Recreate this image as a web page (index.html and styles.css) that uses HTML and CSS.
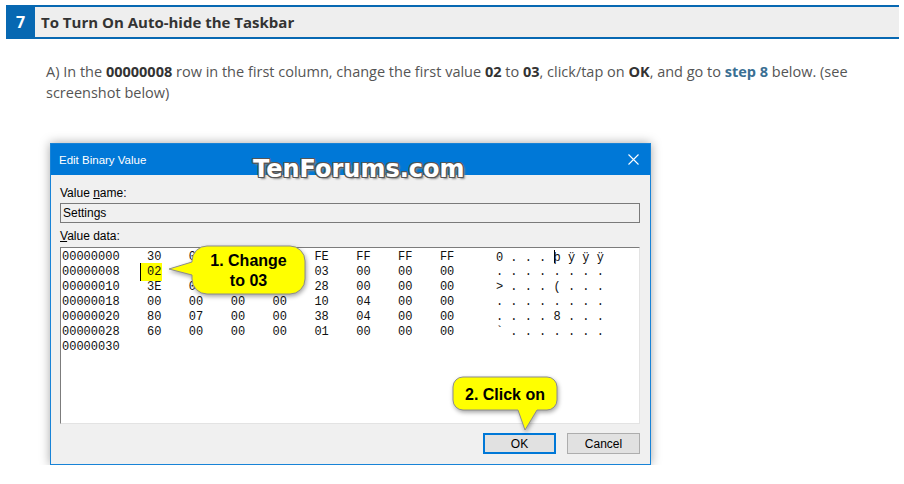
FILE: index.html
```html
<!DOCTYPE html>
<html lang="en">
<head>
  <meta charset="UTF-8">
  <meta name="viewport" content="width=device-width, initial-scale=1.0">
  <title>To Turn On Auto-hide the Taskbar</title>
  <link rel="stylesheet" href="styles.css">
</head>
<body>
  <div class="step">
    <span class="step-num">7</span>
    <h2 class="step-title">To Turn On Auto-hide the Taskbar</h2>
  </div>

  <p class="note">A) In the <b>00000008</b> row in the first column, change the first value <b>02</b> to <b>03</b>, click/tap on <b>OK</b>, and go to <a class="link" href="#step8">step 8</a> below. (see<br>screenshot below)</p>

  <div class="dialog">
    <div class="titlebar">
      <span>Edit Binary Value</span>
      <svg class="close" width="11" height="11" viewBox="0 0 11 11">
        <path d="M0.5 0.5 L10.5 10.5 M10.5 0.5 L0.5 10.5" stroke="#fff" stroke-width="1.1" fill="none"/>
      </svg>
    </div>

    <div class="watermark">TenForums.com</div>

    <div class="dlg-body">
      <div class="lbl">Value <u>n</u>ame:</div>
      <div class="field">Settings</div>
      <div class="lbl lbl-data"><u>V</u>alue data:</div>
      <div class="hexbox">
        <span>00000000</span><span>30</span><span>00</span><span>00</span><span>00</span><span>FE</span><span>FF</span><span>FF</span><span>FF</span><span class="ascii">0 . . . <i class="caret"></i>þ ÿ ÿ ÿ</span>
        <span>00000008</span><span><span class="hl">02</span></span><span>00</span><span>00</span><span>00</span><span>03</span><span>00</span><span>00</span><span>00</span><span class="ascii">. . . . . . . .</span>
        <span>00000010</span><span>3E</span><span>00</span><span>00</span><span>00</span><span>28</span><span>00</span><span>00</span><span>00</span><span class="ascii">&gt; . . . ( . . .</span>
        <span>00000018</span><span>00</span><span>00</span><span>00</span><span>00</span><span>10</span><span>04</span><span>00</span><span>00</span><span class="ascii">. . . . . . . .</span>
        <span>00000020</span><span>80</span><span>07</span><span>00</span><span>00</span><span>38</span><span>04</span><span>00</span><span>00</span><span class="ascii">. . . . 8 . . .</span>
        <span>00000028</span><span>60</span><span>00</span><span>00</span><span>00</span><span>01</span><span>00</span><span>00</span><span>00</span><span class="ascii">` . . . . . . .</span>
        <span>00000030</span>
      </div>
      <div class="buttons">
        <button class="btn btn-ok">OK</button>
        <button class="btn">Cancel</button>
      </div>
    </div>

    <div class="bubble bubble-change">
      <svg width="139" height="51" viewBox="0 0 139 51">
        <path d="M39 1 H122 A15 15 0 0 1 137 16 V34 A15 15 0 0 1 122 49 H39 A15 15 0 0 1 24 34 V30 L1 24 L24 17 V16 A15 15 0 0 1 39 1 Z" fill="#ffff00" stroke="#8c8c8c" stroke-width="1"/>
      </svg>
      <div class="bubble-text">1. Change<br>to 03</div>
    </div>

    <div class="bubble bubble-click">
      <svg width="107" height="56" viewBox="0 0 107 56">
        <path d="M11 1 H95 A10 10 0 0 1 105 11 V24 A10 10 0 0 1 95 34 H85 L73 54 L66 34 H11 A10 10 0 0 1 1 24 V11 A10 10 0 0 1 11 1 Z" fill="#ffff00" stroke="#8c8c8c" stroke-width="1"/>
      </svg>
      <div class="bubble-text">2. Click on</div>
    </div>
  </div>
</body>
</html>
```

FILE: styles.css
```css
body {
  margin: 0;
  background: #fff;
  font-family: "Open Sans", sans-serif;
  color: #555;
}
.step {
  display: flex;
  height: 30px;
  margin: 5px 5px 0 6px;
  background: #eee;
  border-top: 2px solid #0768b2;
  border-bottom: 2px solid #0768b2;
}
.step-num {
  display: flex;
  align-items: center;
  justify-content: center;
  width: 29px;
  margin: -2px 0;
  background: #0768b2;
  color: #fff;
  font-weight: 700;
  font-size: 16px;
}
.step-title {
  align-self: center;
  margin: 0 0 0 6px;
  font-size: 15px;
  font-weight: 700;
  color: #333;
}
.note {
  width: 830px;
  margin: 22px 0 0 46px;
  font-size: 14.5px;
  line-height: 21px;
}
.note b {
  color: #333;
}
.link {
  color: #3a6f93;
  font-weight: 700;
  text-decoration: none;
}
.dialog {
  position: relative;
  width: 599px;
  margin: 40px 0 0 50px;
  border: 1px solid #1883d7;
  background: #f0f0f0;
  box-shadow: 0 0 10px rgba(0, 0, 0, 0.35);
  font-family: "Liberation Sans", Arial, sans-serif;
  color: #000;
}
.titlebar {
  display: flex;
  align-items: center;
  justify-content: space-between;
  height: 31px;
  padding: 0 11px 0 8px;
  background: #0078d7;
  color: #fff;
  font-size: 11.5px;
}
.close {
  display: block;
}
.watermark {
  position: absolute;
  left: 202px;
  top: 11px;
  font-family: "DejaVu Sans", sans-serif;
  font-weight: 700;
  font-size: 24px;
  line-height: 28px;
  color: #fff;
  text-shadow: -1px -1px 0 #555, 1px -1px 0 #555, -1px 1px 0 #555, 1px 1px 0 #555,
    0 -1px 0 #555, 0 1px 0 #555, -1px 0 0 #555, 1px 0 0 #555, 2px 2px 2px #888;
}
.dlg-body {
  padding: 11px 10px 10px 9px;
  font-size: 12px;
}
.lbl {
  line-height: 14px;
}
.lbl-data {
  margin-top: 6px;
}
.field {
  height: 18px;
  margin-top: 3px;
  padding-left: 2px;
  border: 1px solid #7a7a7a;
  line-height: 18px;
}
.hexbox {
  display: grid;
  grid-template-columns: 85px repeat(7, 41.85px) 56px auto;
  grid-auto-rows: 15px;
  align-content: start;
  box-sizing: border-box;
  height: 177px;
  margin-top: 4px;
  padding: 2px 0 0 1px;
  background: #fff;
  border: 1px solid;
  border-color: #7c7c7c #e3e3e3 #e3e3e3 #7c7c7c;
  font-family: "Liberation Mono", monospace;
  font-size: 12px;
  line-height: 15px;
  color: #111;
}
.ascii {
  white-space: pre;
}
.caret {
  display: inline-block;
  width: 1px;
  height: 13px;
  margin-right: -1px;
  vertical-align: -2px;
  background: #000;
}
.hl {
  margin-left: -7px;
  padding: 2px 1px 2px 6px;
  border-left: 1px solid #000;
  background: #ffff00;
}
.buttons {
  display: flex;
  justify-content: flex-end;
  gap: 11px;
  margin-top: 9px;
}
.btn {
  box-sizing: border-box;
  width: 73px;
  height: 21px;
  padding: 0;
  background: #e1e1e1;
  border: 1px solid #adadad;
  font-family: "Liberation Sans", Arial, sans-serif;
  font-size: 12px;
  color: #000;
}
.btn-ok {
  border: 2px solid #0078d7;
}
.bubble {
  position: absolute;
}
.bubble svg {
  position: absolute;
  left: 0;
  top: 0;
  overflow: visible;
  filter: drop-shadow(1px 2px 2px rgba(0, 0, 0, 0.35));
}
.bubble-text {
  position: absolute;
  display: flex;
  align-items: center;
  justify-content: center;
  text-align: center;
  font-weight: 700;
  font-size: 16px;
  line-height: 20px;
  color: #000;
}
.bubble-change {
  left: 117px;
  top: 101px;
  width: 139px;
  height: 51px;
}
.bubble-change .bubble-text {
  left: 24px;
  top: 2px;
  width: 113px;
  height: 48px;
}
.bubble-click {
  left: 401px;
  top: 232px;
  width: 107px;
  height: 56px;
}
.bubble-click .bubble-text {
  left: 1px;
  top: 2px;
  width: 104px;
  height: 33px;
}
```
